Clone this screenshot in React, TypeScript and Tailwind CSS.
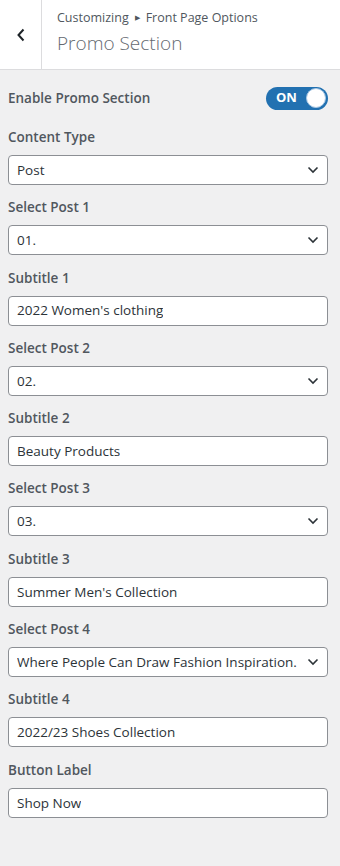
const font = { fontFamily: '"Open Sans", "Noto Sans", sans-serif' };

const fields = [
  { label: "Content Type", type: "select", value: "Post" },
  { label: "Select Post 1", type: "select", value: "01." },
  { label: "Subtitle 1", type: "input", value: "2022 Women's clothing" },
  { label: "Select Post 2", type: "select", value: "02." },
  { label: "Subtitle 2", type: "input", value: "Beauty Products" },
  { label: "Select Post 3", type: "select", value: "03." },
  { label: "Subtitle 3", type: "input", value: "Summer Men's Collection" },
  { label: "Select Post 4", type: "select", value: "Where People Can Draw Fashion Inspiration." },
  { label: "Subtitle 4", type: "input", value: "2022/23 Shoes Collection" },
  { label: "Button Label", type: "input", value: "Shop Now" },
];

const Chevron = () => (
  <svg width="12" height="8" viewBox="0 0 12 8" fill="none">
    <path d="M1.5 1.5 L6 6 L10.5 1.5" stroke="#2c3338" strokeWidth="1.6" />
  </svg>
);

const App = () => {
  return (
    <div className="w-[340px] min-h-[866px] bg-[#f0f0f1]" style={font}>
      <div className="flex h-[70px] bg-white border-b border-[#dcdcde]">
        <div className="w-[42px] flex items-center justify-center border-r border-[#dcdcde]">
          <svg width="10" height="14" viewBox="0 0 10 14" fill="none">
            <path d="M7.5 1.5 L2.5 7 L7.5 12.5" stroke="#1d2327" strokeWidth="2" />
          </svg>
        </div>
        <div className="pl-[15px] pt-[9px]">
          <div className="text-[12.5px] text-[#50575e] flex items-center gap-[6px]">
            <span>Customizing</span>
            <span className="text-[7px]">▶</span>
            <span>Front Page Options</span>
          </div>
          <div className="text-[19px] font-light text-[#646970] mt-[1px]">Promo Section</div>
        </div>
      </div>

      <div className="pl-[8px] pr-[12px] pt-[16px]">
        <div className="flex items-center justify-between h-[24px]">
          <span className="text-[13.5px] font-semibold text-[#50575e]">Enable Promo Section</span>
          <div className="w-[62px] h-[23px] rounded-full bg-[#2271b1] flex items-center justify-between pl-[10px] pr-[2px]">
            <span className="text-white text-[13px] font-bold">ON</span>
            <span className="w-[20px] h-[20px] rounded-full bg-white border border-[#a7c6e3]" />
          </div>
        </div>

        <div className="flex flex-col mt-[13px]">
          {fields.map((f) => (
            <div key={f.label} className="h-[70.3px] flex flex-col pt-[4px]">
              <span className="text-[13.5px] font-semibold text-[#50575e] leading-[20px]">{f.label}</span>
              <div className="mt-[8px] h-[30px] bg-white border border-[#8c8f94] rounded-[4px] flex items-center justify-between pl-[8px] pr-[8px]">
                <span className="text-[13.5px] text-[#2c3338] truncate">{f.value}</span>
                {f.type === "select" && <Chevron />}
              </div>
            </div>
          ))}
        </div>
      </div>
    </div>
  );
};

export default App;
